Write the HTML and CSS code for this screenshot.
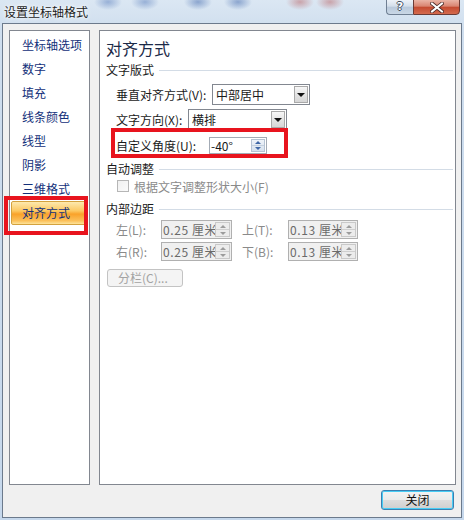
FILE: index.html
```html
<!DOCTYPE html>
<html lang="zh-CN">
<head>
<meta charset="utf-8">
<title>设置坐标轴格式</title>
<link rel="stylesheet" href="styles.css">
</head>
<body>
<div class="window">
  <div class="titlebar">
    <div class="title">设置坐标轴格式</div>
    <div class="caption-btns">
      <div class="cbtn help">?</div>
      <div class="cbtn close">
        <svg width="14" height="11" viewBox="0 0 14 11"><path d="M2 1.5 L12 9.5 M12 1.5 L2 9.5" stroke="#4a2a28" stroke-width="3.6" stroke-linecap="square" fill="none"/><path d="M2 1.5 L12 9.5 M12 1.5 L2 9.5" stroke="#ffffff" stroke-width="2" stroke-linecap="square" fill="none"/></svg>
      </div>
    </div>
  </div>
  <div class="client">
    <div class="panes">
      <ul class="nav">
        <li>坐标轴选项</li>
        <li>数字</li>
        <li>填充</li>
        <li>线条颜色</li>
        <li>线型</li>
        <li>阴影</li>
        <li>三维格式</li>
        <li class="active">对齐方式<span class="mark mark-nav"></span></li>
      </ul>
      <div class="content">
        <div class="heading">对齐方式</div>
        <div class="group"><span>文字版式</span><i class="rule"></i></div>
        <div class="row r1">
          <span class="lbl l-vert">垂直对齐方式(V):</span>
          <div class="select s1"><span class="val">中部居中</span><b class="dd"><i class="tri"></i></b></div>
        </div>
        <div class="row r2">
          <span class="lbl l-dir">文字方向(X):</span>
          <div class="select s2"><span class="val">横排</span><b class="dd"><i class="tri"></i></b></div>
        </div>
        <div class="row r3">
          <span class="lbl l-ang">自定义角度(U):</span>
          <div class="spin"><span class="val">-40°</span><b class="sp"><i class="up"></i><i class="down"></i></b></div>
          <span class="mark mark-row"></span>
        </div>
        <div class="group g2"><span>自动调整</span><i class="rule"></i></div>
        <div class="row chk-row">
          <span class="chk"></span><span class="dis">根据文字调整形状大小(F)</span>
        </div>
        <div class="group g3"><span>内部边距</span><i class="rule"></i></div>
        <div class="row m-row m1">
          <span class="lbl dis l-m">左(L):</span>
          <div class="num"><span class="nv">0.25 厘米</span><b class="nsp"><i class="up"></i><i class="down"></i></b></div>
          <span class="lbl dis l-m2">上(T):</span>
          <div class="num"><span class="nv">0.13 厘米</span><b class="nsp"><i class="up"></i><i class="down"></i></b></div>
        </div>
        <div class="row m-row m2">
          <span class="lbl dis l-m">右(R):</span>
          <div class="num"><span class="nv">0.25 厘米</span><b class="nsp"><i class="up"></i><i class="down"></i></b></div>
          <span class="lbl dis l-m2">下(B):</span>
          <div class="num"><span class="nv">0.13 厘米</span><b class="nsp"><i class="up"></i><i class="down"></i></b></div>
        </div>
        <div class="cols-btn">分栏(C)...</div>
      </div>
    </div>
    <div class="footer"><button class="btn-close">关闭</button></div>
  </div>
</div>
</body>
</html>
```
FILE: styles.css
```css
html, body {
  margin: 0;
  padding: 0;
}
body {
  font-family: "Noto Sans CJK SC", "Liberation Sans", sans-serif;
  font-size: 12px;
  color: #1a1a1a;
}
.window {
  width: 464px;
  height: 520px;
  box-sizing: border-box;
  padding: 0 2px 2px 2px;
  display: flex;
  flex-direction: column;
  background:
    radial-gradient(ellipse 14px 8px at 108px 2px, rgba(70,110,180,0.45), rgba(70,110,180,0) ),
    radial-gradient(ellipse 14px 8px at 145px 2px, rgba(70,110,180,0.45), rgba(70,110,180,0) ),
    radial-gradient(ellipse 14px 8px at 198px 2px, rgba(60,100,170,0.5), rgba(60,100,170,0) ),
    radial-gradient(ellipse 14px 8px at 238px 2px, rgba(60,100,170,0.5), rgba(60,100,170,0) ),
    radial-gradient(ellipse 14px 8px at 300px 2px, rgba(180,80,80,0.45), rgba(180,80,80,0) ),
    radial-gradient(ellipse 14px 8px at 330px 2px, rgba(180,80,80,0.45), rgba(180,80,80,0) ),
    linear-gradient(#dbe7f3, #cfdeee 30px, #c6d8ec);
}
.titlebar {
  height: 23px;
  display: flex;
  justify-content: space-between;
  align-items: flex-start;
  padding: 0 2px 0 2px;
}
.title {
  line-height: 24px;
  font-size: 12px;
  color: #1c1c1c;
  text-shadow: 0 0 6px #ffffff, 0 0 3px #ffffff;
}
.caption-btns {
  display: flex;
  margin-top: -1px;
}
.cbtn {
  height: 16px;
  box-sizing: border-box;
  display: flex;
  align-items: center;
  justify-content: center;
}
.help {
  width: 27px;
  border: 1px solid #6f7f93;
  border-right: none;
  border-radius: 0 0 0 4px;
  background: linear-gradient(#edf2f8, #d3deea 45%, #b9c9db 50%, #c9d7e6);
  color: #ffffff;
  font-family: "DejaVu Sans", sans-serif;
  font-weight: bold;
  font-size: 11px;
  line-height: 14px;
  text-shadow: -1px 0 #3f4e60, 1px 0 #3f4e60, 0 -1px #3f4e60, 0 1px #3f4e60;
}
.close {
  width: 47px;
  border: 1px solid #6b3b36;
  border-radius: 0 0 4px 0;
  background: linear-gradient(#eab4a6, #d98470 45%, #c44a30 50%, #d46a4e);
}
.client {
  flex: 1;
  border: 1px solid #6c7a8c;
  background: #f0f0f0;
  display: flex;
  flex-direction: column;
}
.panes {
  display: flex;
  margin: 6px 5px 0 6px;
  height: 455px;
  gap: 9px;
}
.nav {
  list-style: none;
  margin: 0;
  padding: 2px 0 0 0;
  width: 81px;
  box-sizing: border-box;
  border: 1px solid #828790;
  background: #ffffff;
}
.nav li {
  height: 24px;
  line-height: 24px;
  padding-left: 11px;
  margin: 0 2px 0 1px;
  color: #13307a;
  position: relative;
  box-sizing: border-box;
}
.nav li.active {
  border: 1px solid #d4a23e;
  border-radius: 2px;
  padding-left: 10px;
  line-height: 22px;
  background: linear-gradient(#fde9ae, #fcc862 40%, #f9a22a 55%, #fbc05a 85%, #fde39a);
}
.mark {
  position: absolute;
  box-sizing: border-box;
  border: 4px solid #e8141e;
}
.mark-nav {
  left: -8px;
  top: -6px;
  width: 84px;
  height: 39px;
}
.content {
  flex: 1;
  box-sizing: border-box;
  border: 1px solid #828790;
  background: #ffffff;
  padding: 6px 0 0 6px;
}
.heading {
  height: 22px;
  line-height: 22px;
  font-size: 16px;
  color: #1b2a48;
}
.group {
  display: flex;
  align-items: center;
  height: 16px;
  line-height: 16px;
  margin-top: 3px;
  color: #1a1a1a;
}
.rule {
  flex: 1;
  height: 1px;
  background: #d3dce6;
  margin: 0 2px 0 5px;
}
.g2 { margin-top: 5px; }
.g3 { margin-top: 7px; }
.row {
  display: flex;
  align-items: center;
  padding-left: 10px;
  position: relative;
}
.lbl {
  flex: none;
  white-space: nowrap;
}
.l-vert { width: 96px; }
.l-dir { width: 72px; }
.l-ang { width: 93px; }
.r1 { margin-top: 6px; height: 21px; }
.r2 { margin-top: 4px; height: 21px; }
.r3 { margin-top: 4px; height: 22px; }
.select {
  height: 21px;
  box-sizing: border-box;
  border: 1px solid #828790;
  background: #ffffff;
  display: flex;
  align-items: stretch;
}
.s1 { width: 98px; }
.s2 { width: 99px; }
.val {
  flex: 1;
  padding-left: 3px;
  line-height: 19px;
  white-space: nowrap;
}
.dd {
  width: 14px;
  margin: 1px;
  box-sizing: border-box;
  border: 1px solid #a9a9a9;
  background: linear-gradient(#f7f7f7, #e4e4e4 50%, #d6d6d6);
  display: flex;
  align-items: center;
  justify-content: center;
}
.tri {
  width: 0;
  height: 0;
  border-left: 4px solid transparent;
  border-right: 4px solid transparent;
  border-top: 4px solid #111111;
  margin-top: 1px;
}
.spin {
  width: 58px;
  height: 17px;
  box-sizing: border-box;
  border: 1px solid #a3abb5;
  background: #ffffff;
  display: flex;
}
.spin .val {
  line-height: 15px;
  padding-left: 1px;
}
.sp {
  width: 14px;
  margin: 1px 1px 1px 0;
  display: flex;
  flex-direction: column;
  background: linear-gradient(#eef3f9, #d6e1ee);
  border: 1px solid #b5c3d4;
  box-sizing: border-box;
}
.sp i, .nsp i {
  flex: 1;
  display: flex;
  align-items: center;
  justify-content: center;
}
.sp .up::before, .nsp .up::before {
  content: "";
  border-left: 3px solid transparent;
  border-right: 3px solid transparent;
  border-bottom: 3px solid #3f67a6;
}
.sp .down::before, .nsp .down::before {
  content: "";
  border-left: 3px solid transparent;
  border-right: 3px solid transparent;
  border-top: 3px solid #3f67a6;
}
.sp .up { border-bottom: 1px solid #c4d0de; }
.mark-row {
  left: 5px;
  top: -6px;
  width: 177px;
  height: 30px;
}
.chk-row {
  margin-top: 1px;
  height: 16px;
  padding-left: 11px;
}
.chk {
  width: 12px;
  height: 12px;
  box-sizing: border-box;
  border: 1px solid #b6b6b6;
  background: linear-gradient(135deg, #f0f0f0, #fafafa);
  margin-right: 5px;
}
.dis { color: #8a8a8a; }
.m-row {
  margin-top: 3px;
  height: 19px;
}
.l-m { width: 45px; }
.l-m2 { width: 46px; margin-left: 10px; }
.num {
  width: 71px;
  height: 19px;
  box-sizing: border-box;
  border: 1px solid #b0b0b0;
  background: #f0f0f0;
  display: flex;
  overflow: hidden;
}
.m-row .num:last-child { width: 70px; }
.nv {
  flex: 1;
  overflow: hidden;
  white-space: nowrap;
  color: #6a6a6a;
  padding-left: 1px;
  line-height: 17px;
  letter-spacing: 0.6px;
}
.nsp {
  width: 15px;
  flex: none;
  margin: 1px 1px 1px 0;
  box-sizing: border-box;
  border: 1px solid #c9c9c9;
  background: #ececec;
  display: flex;
  flex-direction: column;
}
.nsp .up { border-bottom: 1px solid #cfcfcf; }
.nsp .up::before { border-bottom-color: #9c9c9c; }
.nsp .down::before { border-top-color: #9c9c9c; }
.cols-btn {
  margin: 8px 0 0 1px;
  width: 76px;
  height: 18px;
  box-sizing: border-box;
  border: 1px solid #c3c3c3;
  border-radius: 3px;
  background: #f4f4f4;
  color: #a3a3a3;
  line-height: 16px;
  padding-left: 10px;
}
.footer {
  display: flex;
  justify-content: flex-end;
  padding: 5px 7px 0 0;
}
.btn-close {
  width: 73px;
  height: 20px;
  box-sizing: border-box;
  border: 1px solid #3c7fb1;
  border-radius: 3px;
  box-shadow: inset 0 0 0 1px #48cdf5;
  background: linear-gradient(#f3f3f3, #ebebeb 50%, #dddddd 50%, #cfcfcf);
  font-family: "Noto Sans CJK SC", sans-serif;
  font-size: 12px;
  line-height: 16px;
  color: #111111;
  padding: 0;
}
```
